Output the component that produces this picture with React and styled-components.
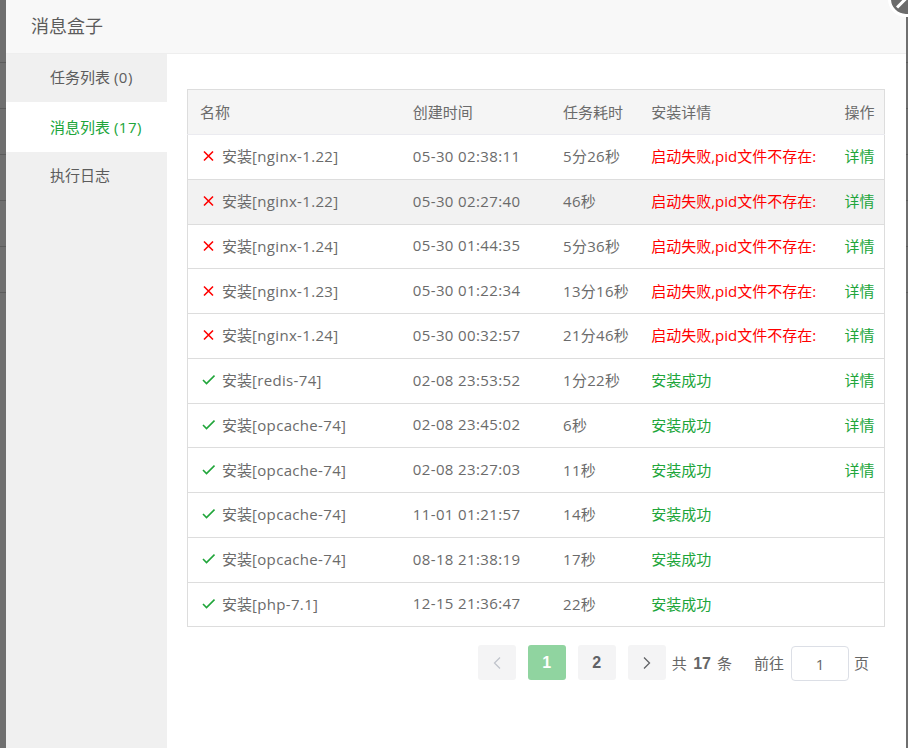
import styled, { createGlobalStyle } from 'styled-components'

const GlobalStyle = createGlobalStyle`
  html, body {
    margin: 0;
    height: 100%;
    overflow: hidden;
  }
  body {
    font-family: "Open Sans", "Noto Sans CJK SC", sans-serif;
    font-size: 15px;
    color: #666;
    background-color: #6f6f6f;
    background-image: repeating-linear-gradient(
      to bottom,
      transparent 0,
      transparent 45px,
      #5c5c5c 45px,
      #5c5c5c 46px
    );
    background-size: 100% 300px;
    background-repeat: no-repeat;
    background-position: 0 17px;
  }
`

const Modal = styled.div`
  width: 900px;
  height: 748px;
  margin-left: 6px;
  background: #fff;
  display: flex;
  flex-direction: column;
  position: relative;
`

const CloseBtn = styled.button`
  position: absolute;
  right: -18px;
  top: -19px;
  width: 30px;
  height: 30px;
  padding: 0;
  border: 3px solid #fff;
  border-radius: 50%;
  background: #6b6b6b;
  box-sizing: content-box;
  overflow: hidden;

  &::after {
    content: '';
    position: absolute;
    left: 4px;
    top: 17px;
    width: 14px;
    height: 3px;
    background: #fff;
    transform: rotate(-45deg);
  }
`

const Header = styled.div`
  height: 54px;
  flex: none;
  box-sizing: border-box;
  padding-left: 25px;
  background: #f8f8f8;
  border-bottom: 1px solid #eee;
  font-size: 18px;
  line-height: 52px;
  color: #5c5c5c;
`

const Body = styled.div`
  flex: 1;
  display: flex;
  min-height: 0;
`

const Side = styled.div`
  width: 161px;
  flex: none;
  background: #f0f0f0;
`

const Tab = styled.div`
  height: ${({ $active }) => ($active ? '50px' : '48px')};
  line-height: ${({ $active }) => ($active ? '50px' : '47px')};
  padding-left: 44px;
  background: ${({ $active }) => ($active ? '#fff' : 'transparent')};
  color: ${({ $active }) => ($active ? '#20a53a' : '#5c5c5c')};
`

const Count = styled.span`
  letter-spacing: 0.5px;
`

const Main = styled.div`
  flex: 1;
  padding: 35px 21px 0 20px;
`

const Table = styled.table`
  width: 698px;
  table-layout: fixed;
  border-collapse: collapse;
  border: 1px solid #ddd;
`

const Th = styled.th`
  height: 45px;
  padding: 0 0 2px 12px;
  box-sizing: border-box;
  background: #f5f5f5;
  border-bottom: 1px solid #ebebf0;
  text-align: left;
  font-weight: 400;
  color: #6b6b6b;
`

const Row = styled.tr`
  height: 44.75px;
  background: ${({ $hover }) => ($hover ? '#f2f2f2' : '#fff')};
`

const Td = styled.td`
  padding: 0 0 2px 12px;
  box-sizing: border-box;
  border-top: 1px solid #ddd;
  color: #6b6b6b;
  white-space: nowrap;
  overflow: hidden;
  letter-spacing: ${({ $spaced }) => $spaced || 'normal'};
`

const Name = styled.div`
  display: flex;
  align-items: center;
  gap: 7px;
  padding-left: 2px;
`

const Pkg = styled.span`
  letter-spacing: 0.33px;
`

const Detail = styled.div`
  overflow: hidden;
  white-space: nowrap;
  color: ${({ $ok }) => ($ok ? '#20a53a' : '#f00')};
`

const Link = styled.a`
  color: #20a53a;
`

const Pager = styled.div`
  display: flex;
  align-items: center;
  justify-content: flex-end;
  margin-top: 17px;
  padding-right: 16px;
`

const PageBtn = styled.button`
  width: 38px;
  height: 35px;
  margin-right: 12px;
  padding: 0;
  border: 0;
  border-radius: 3px;
  display: flex;
  align-items: center;
  justify-content: center;
  font-family: "Liberation Sans", sans-serif;
  font-size: 16px;
  font-weight: 700;
  background: ${({ $active }) => ($active ? '#90d4a0' : '#f4f4f5')};
  color: ${({ $active }) => ($active ? '#fff' : '#606266')};

  &:nth-of-type(4) { margin-right: 6px; }
`

const Total = styled.span`
  margin-right: 22px;

  b { font-family: "Liberation Sans", sans-serif; font-size: 16px; margin: 0 6px 0 6.5px; }
`

const Jump = styled.span`
  display: flex;
  align-items: center;
`

const JumpInput = styled.input`
  width: 58px;
  height: 35px;
  box-sizing: border-box;
  border: 1px solid #dcdfe6;
  border-radius: 4px;
  margin: 2px 5px 0 7px;
  text-align: center;
  font: inherit;
  color: #666;
  outline: none;
`

const Cross = () => (
  <svg width="13" height="13" viewBox="0 0 13 13" fill="none" stroke="#f00" strokeWidth="1.6">
    <path d="M2 2.5l9 9M11 2.5l-9 9" />
  </svg>
)

const Check = () => (
  <svg width="13" height="13" viewBox="0 0 13 13" fill="none" stroke="#20a53a" strokeWidth="1.6">
    <path d="M1 7l3.5 3.5 8-8" />
  </svg>
)

const Chevron = ({ left, color }) => (
  <svg width="10" height="14" viewBox="0 0 10 14" fill="none" stroke={color} strokeWidth="1.3">
    <path d={left ? 'M8 1.5L2.5 7 8 12.5' : 'M2 1.5L7.5 7 2 12.5'} />
  </svg>
)

const fail = '启动失败,pid文件不存在:'

const rows = [
  ['nginx-1.22', '05-30 02:38:11', '5分26秒', fail, true],
  ['nginx-1.22', '05-30 02:27:40', '46秒', fail, true],
  ['nginx-1.24', '05-30 01:44:35', '5分36秒', fail, true],
  ['nginx-1.23', '05-30 01:22:34', '13分16秒', fail, true],
  ['nginx-1.24', '05-30 00:32:57', '21分46秒', fail, true],
  ['redis-74', '02-08 23:53:52', '1分22秒', '安装成功', true],
  ['opcache-74', '02-08 23:45:02', '6秒', '安装成功', true],
  ['opcache-74', '02-08 23:27:03', '11秒', '安装成功', true],
  ['opcache-74', '11-01 01:21:57', '14秒', '安装成功', false],
  ['opcache-74', '08-18 21:38:19', '17秒', '安装成功', false],
  ['php-7.1', '12-15 21:36:47', '22秒', '安装成功', false],
]

export default function App() {
  return (
    <>
      <GlobalStyle />
      <Modal>
        <CloseBtn aria-label="关闭" />
        <Header>消息盒子</Header>
        <Body>
          <Side>
            <Tab>任务列表 <Count>(0)</Count></Tab>
            <Tab $active>消息列表 <Count>(17)</Count></Tab>
            <Tab>执行日志</Tab>
          </Side>
          <Main>
            <Table>
              <colgroup>
                <col width="213" />
                <col width="150" />
                <col width="88" />
                <col width="193" />
                <col width="52" />
              </colgroup>
              <thead>
                <tr>
                  <Th>名称</Th>
                  <Th>创建时间</Th>
                  <Th>任务耗时</Th>
                  <Th>安装详情</Th>
                  <Th>操作</Th>
                </tr>
              </thead>
              <tbody>
                {rows.map(([name, time, cost, detail, link], i) => {
                  const ok = detail === '安装成功'
                  return (
                    <Row key={i} $hover={i === 1}>
                      <Td>
                        <Name>
                          {ok ? <Check /> : <Cross />}
                          <span>安装<Pkg>[{name}]</Pkg></span>
                        </Name>
                      </Td>
                      <Td $spaced="0.37px">{time}</Td>
                      <Td $spaced="0.3px">{cost}</Td>
                      <Td><Detail $ok={ok}>{detail}</Detail></Td>
                      <Td>{link && <Link>详情</Link>}</Td>
                    </Row>
                  )
                })}
              </tbody>
            </Table>
            <Pager>
              <PageBtn><Chevron left color="#c0c4cc" /></PageBtn>
              <PageBtn $active>1</PageBtn>
              <PageBtn>2</PageBtn>
              <PageBtn><Chevron color="#606266" /></PageBtn>
              <Total>共<b>17</b>条</Total>
              <Jump>
                前往
                <JumpInput defaultValue="1" />
                页
              </Jump>
            </Pager>
          </Main>
        </Body>
      </Modal>
    </>
  )
}
